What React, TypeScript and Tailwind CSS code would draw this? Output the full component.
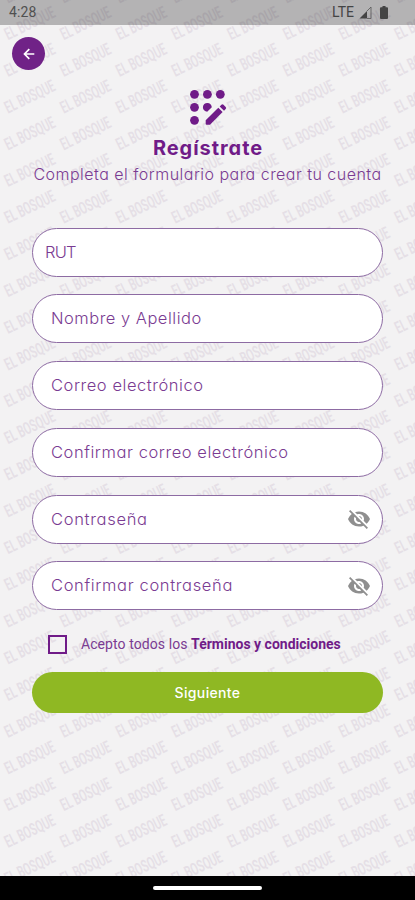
import { useState } from "react";
import { MdVisibilityOff } from "react-icons/md";

const FIELDS = [
  { name: "rut", label: "RUT", className: "pl-[12px] tracking-[-0.8px]" },
  { name: "nombre", label: "Nombre y Apellido", className: "pl-[18px] tracking-[0.5px]" },
  { name: "correo", label: "Correo electrónico", className: "pl-[18px] tracking-[0.55px]" },
  { name: "correo2", label: "Confirmar correo electrónico", className: "pl-[18px] tracking-[0.56px]" },
  { name: "clave", label: "Contraseña", secret: true, className: "pl-[18px] tracking-[0.7px]" },
  { name: "clave2", label: "Confirmar contraseña", secret: true, className: "pl-[18px] tracking-[0.65px]" },
];

const ROWS = Array.from({ length: 25 }, (_, i) => 3.5 + i * 36.72);
const COLS = Array.from({ length: 8 }, (_, i) => 8 + i * 55.75);

function Watermark() {
  return (
    <svg className="absolute inset-0 h-full w-full" viewBox="0 0 415 900" aria-hidden="true">
      {ROWS.map((y) =>
        COLS.map((x) => (
          <text
            key={`${x}-${y}`}
            transform={`translate(${x} ${y}) rotate(-26) scale(0.6 1)`}
            textLength={90}
            lengthAdjust="spacingAndGlyphs"
            className="fill-[#e5dfe6] font-['Roboto'] text-[17px] font-semibold"
          >
            EL BOSQUE
          </text>
        ))
      )}
    </svg>
  );
}

function StatusBar() {
  return (
    <div className="flex h-[25px] items-center justify-between bg-black/26 pr-[27px] pl-[9px] font-['Roboto',sans-serif] text-[#505050]">
      <span className="text-[14px] tracking-[0.1px]">4:28</span>
      <div className="flex items-center">
        <span className="text-[14px] text-[#444]">LTE</span>
        <svg className="ml-[5px]" width="13" height="13" viewBox="0 0 13 13" fill="#444">
          <path d="M0.5 12.5 8 5v7.5z" />
          <path d="M8 5 12 1v11.5H8" fill="none" stroke="#555" strokeWidth="0.8" />
        </svg>
        <svg className="ml-[8px]" width="8" height="13" viewBox="0 0 8 13" fill="#444">
          <path d="M2.5 0h3v1.3H7a1 1 0 0 1 1 1V12a1 1 0 0 1-1 1H1a1 1 0 0 1-1-1V2.3a1 1 0 0 1 1-1h1.5z" />
        </svg>
      </div>
    </div>
  );
}

function BackIcon() {
  return (
    <svg width="12" height="12" viewBox="0 0 12 12" fill="none" stroke="white" strokeWidth="1.7">
      <path d="M6.3 1.2 1.5 6l4.8 4.8M1.500 6H11.300" />
    </svg>
  );
}

function RegisterIcon() {
  return (
    <svg width="40" height="38" viewBox="0 0 40 38" fill="#701b88">
      <circle cx="6.5" cy="5.3" r="4.4" />
      <circle cx="19.4" cy="5.3" r="4.4" />
      <circle cx="32.3" cy="5.3" r="4.4" />
      <circle cx="6.5" cy="18.3" r="4.4" />
      <path d="M19.4 13.9a4.4 4.4 0 0 1 4.4 4.4l-4.6 4.4a4.4 4.4 0 0 1 .2-8.8z" />
      <circle cx="6.5" cy="31.3" r="4.4" />
      <path d="M17.7 31.2 30.3 18.8l4.3 4.3L22 35.7h-3.3a1 1 0 0 1-1-1z" />
      <path d="m31.7 17.4 1.7-1.7a1.5 1.5 0 0 1 2.1 0l2.2 2.2a1.5 1.5 0 0 1 0 2.1l-1.7 1.7z" />
    </svg>
  );
}

export default function App() {
  const [accepted, setAccepted] = useState(false);

  return (
    <div className="relative h-[900px] w-[415px] overflow-hidden bg-[#f3f2f3] [font-feature-settings:'cv11']">
      <Watermark />
      <div className="relative flex h-full flex-col font-['Inter',sans-serif] text-[#701b88]">
        <StatusBar />

        <div className="h-[64px] pt-[12px] pl-[12px]">
          <button className="flex h-[33px] w-[33px] items-center justify-center rounded-full bg-[#702287]">
            <BackIcon />
          </button>
        </div>

        <header className="flex h-[138.5px] flex-col items-center">
          <RegisterIcon />
          <h1 className="mt-[7px] ml-[1px] text-[20px] leading-[28px] font-bold tracking-[0.95px]">Regístrate</h1>
          <p className="text-[16px] leading-[24px] font-light tracking-[0.48px] whitespace-nowrap text-[#7a3b92]">
            Completa el formulario para crear tu cuenta
          </p>
        </header>

        <form className="flex flex-col px-[32px]" onSubmit={(e) => e.preventDefault()}>
          <div className="flex flex-col gap-[17.75px]">
            {FIELDS.map((field) => (
              <label
                key={field.name}
                className="flex h-[49px] items-center justify-between rounded-full border border-[#8d6ba3] bg-white pr-[11px]"
              >
                <span className={`text-[16.5px] font-light text-[#7a3b92] ${field.className}`}>{field.label}</span>
                {field.secret && <MdVisibilityOff size={24} className="text-[#8f8f8f]" />}
              </label>
            ))}
          </div>

          <div className="mt-[24px] flex h-[20px] items-center pl-[15.5px] font-['Roboto',sans-serif] text-[14px]">
            <button
              type="button"
              role="checkbox"
              aria-checked={accepted}
              onClick={() => setAccepted(!accepted)}
              className="h-[19px] w-[19px] border-2 border-[#701b88]"
            />
            <span className="ml-[14.5px] whitespace-nowrap">
              <span className="tracking-[0.08px] text-[#7a3b92]">Acepto todos los </span>
              <b className="font-bold">Términos y condiciones</b>
            </span>
          </div>

          <button className="mt-[17.5px] h-[41px] rounded-full bg-[#8fb823] text-[14px] font-medium tracking-[0.35px] text-white">
            Siguiente
          </button>
        </form>

        <div className="mt-auto flex h-[24px] justify-center bg-black pt-[10px]">
          <div className="h-[4px] w-[109px] rounded-full bg-white" />
        </div>
      </div>
    </div>
  );
}
